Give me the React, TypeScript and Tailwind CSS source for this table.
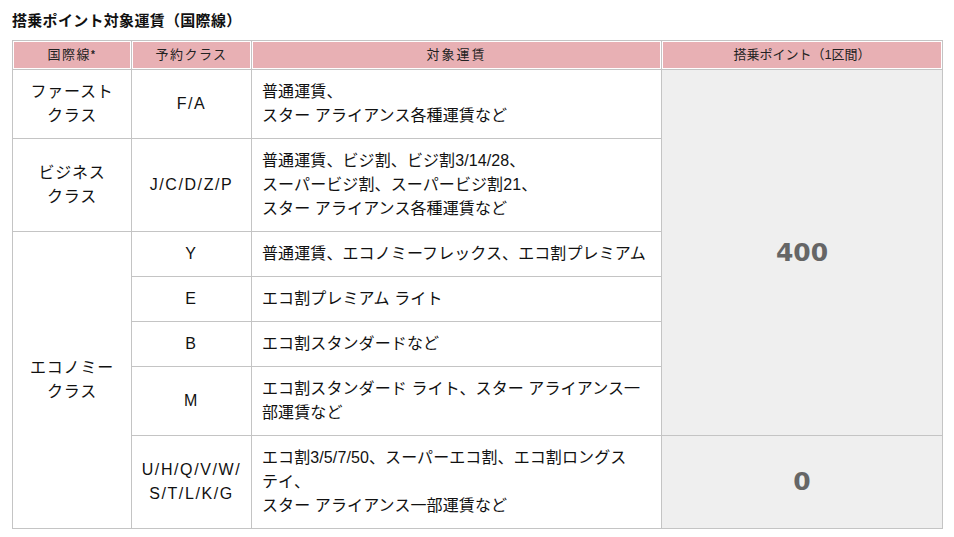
import React from "react";

const jp = '"Liberation Sans", "Noto Sans CJK JP", sans-serif';

export default function App() {
  const th =
    "border border-[#c4c4c4] bg-[#e8b0b4] shadow-[inset_0_0_0_1px_#ffffff] h-[29px] p-0 text-[13px] font-normal text-[#222] text-center align-middle leading-[18px] whitespace-nowrap";
  const td =
    "border border-[#c4c4c4] px-[10px] py-[10px] text-[16px] leading-[24px] tracking-[0.1px] text-[#111] align-middle whitespace-nowrap";
  const tdc = td + " text-center";
  const cls =
    "border border-[#c4c4c4] px-[4px] py-[10px] text-[16px] leading-[24px] tracking-[1.6px] text-[#111] text-center align-middle whitespace-nowrap";
  const pts =
    "border border-[#c4c4c4] bg-[#efefef] text-center align-middle text-[25px] font-bold text-[#666]";
  return (
    <div className="bg-white w-[954px] h-[537px] pl-[12px]" style={{ fontFamily: jp }}>
      <div className="pt-[9px] pb-[7px] text-[15px] leading-[24px] font-bold text-[#111] tracking-[0.3px]">
        搭乗ポイント対象運賃（国際線）
      </div>
      <table className="border-collapse table-fixed w-[930px]">
        <colgroup>
          <col className="w-[119px]" />
          <col className="w-[120px]" />
          <col className="w-[410px]" />
          <col className="w-[281px]" />
        </colgroup>
        <thead>
          <tr>
            <th className={th + " tracking-[1.5px]"}>
              国際線<sup className="text-[10px] font-bold relative -top-[1px]">*</sup>
            </th>
            <th className={th + " tracking-[1.5px]"}>予約クラス</th>
            <th className={th + " tracking-[2px]"}>対象運賃</th>
            <th className={th}>搭乗ポイント（1区間）</th>
          </tr>
        </thead>
        <tbody>
          <tr>
            <td className={tdc + " tracking-[0.8px]"}>
              ファースト
              <br />
              クラス
            </td>
            <td className={cls}>F/A</td>
            <td className={td}>
              普通運賃、
              <br />
              スター アライアンス各種運賃など
            </td>
            <td className={pts} rowSpan={6} style={{ fontFamily: '"DejaVu Sans", sans-serif' }}>
              400
            </td>
          </tr>
          <tr>
            <td className={tdc + " tracking-[0.8px]"}>
              ビジネス
              <br />
              クラス
            </td>
            <td className={cls}>J/C/D/Z/P</td>
            <td className={td}>
              普通運賃、ビジ割、ビジ割3/14/28、
              <br />
              スーパービジ割、スーパービジ割21、
              <br />
              スター アライアンス各種運賃など
            </td>
          </tr>
          <tr>
            <td className={tdc + " tracking-[0.8px]"} rowSpan={5}>
              エコノミー
              <br />
              クラス
            </td>
            <td className={cls}>Y</td>
            <td className={td}>普通運賃、エコノミーフレックス、エコ割プレミアム</td>
          </tr>
          <tr>
            <td className={cls}>E</td>
            <td className={td}>エコ割プレミアム ライト</td>
          </tr>
          <tr>
            <td className={cls}>B</td>
            <td className={td}>エコ割スタンダードなど</td>
          </tr>
          <tr>
            <td className={cls}>M</td>
            <td className={td}>
              エコ割スタンダード ライト、スター アライアンス一
              <br />
              部運賃など
            </td>
          </tr>
          <tr>
            <td className={cls}>
              U/H/Q/V/W/
              <br />
              S/T/L/K/G
            </td>
            <td className={td}>
              エコ割3/5/7/50、スーパーエコ割、エコ割ロングス
              <br />
              テイ、
              <br />
              スター アライアンス一部運賃など
            </td>
            <td className={pts} style={{ fontFamily: '"DejaVu Sans", sans-serif' }}>
              0
            </td>
          </tr>
        </tbody>
      </table>
    </div>
  );
}
